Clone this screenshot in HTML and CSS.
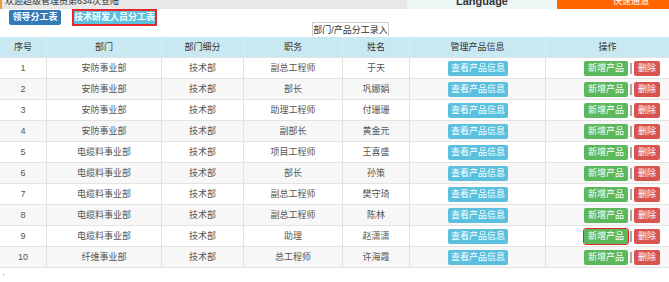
FILE: index.html
```html
<!DOCTYPE html>
<html lang="zh-CN">
<head>
    <meta charset="UTF-8">
    <title>部门/产品分工录入</title>
<link rel="stylesheet" href="styles.css">
</head>
<body>
    <div class="topbar">
        <div class="welcome"><span>欢迎超级管理员第634次登陆</span></div>
        <div class="lang"><span>Language</span></div>
        <div class="quick"><span>快速通道</span></div>
    </div>

    <div class="toolbar">
        <button class="btn btn-primary">领导分工表</button>
        <button class="btn btn-info active">技术研发人员分工表</button>
        <div class="caption">部门/产品分工录入</div>
    </div>

    <table class="list">
        <thead>
            <tr>
                <th class="c-no">序号</th>
                <th class="c-dept">部门</th>
                <th class="c-sub">部门细分</th>
                <th class="c-job">职务</th>
                <th class="c-name">姓名</th>
                <th class="c-info">管理产品信息</th>
                <th class="c-op">操作</th>
            </tr>
        </thead>
        <tbody>
            <tr><td>1</td><td>安防事业部</td><td>技术部</td><td>副总工程师</td><td>于天</td><td><button class="btn btn-view">查看产品信息</button></td><td class="ops"><button class="btn btn-add">新增产品</button><i class="sep"></i><button class="btn btn-del">删除</button></td></tr>
            <tr><td>2</td><td>安防事业部</td><td>技术部</td><td>部长</td><td>巩娜娟</td><td><button class="btn btn-view">查看产品信息</button></td><td class="ops"><button class="btn btn-add">新增产品</button><i class="sep"></i><button class="btn btn-del">删除</button></td></tr>
            <tr><td>3</td><td>安防事业部</td><td>技术部</td><td>助理工程师</td><td>付珊珊</td><td><button class="btn btn-view">查看产品信息</button></td><td class="ops"><button class="btn btn-add">新增产品</button><i class="sep"></i><button class="btn btn-del">删除</button></td></tr>
            <tr><td>4</td><td>安防事业部</td><td>技术部</td><td>副部长</td><td>黄金元</td><td><button class="btn btn-view">查看产品信息</button></td><td class="ops"><button class="btn btn-add">新增产品</button><i class="sep"></i><button class="btn btn-del">删除</button></td></tr>
            <tr><td>5</td><td>电缆料事业部</td><td>技术部</td><td>项目工程师</td><td>王喜盛</td><td><button class="btn btn-view">查看产品信息</button></td><td class="ops"><button class="btn btn-add">新增产品</button><i class="sep"></i><button class="btn btn-del">删除</button></td></tr>
            <tr><td>6</td><td>电缆料事业部</td><td>技术部</td><td>部长</td><td>孙策</td><td><button class="btn btn-view">查看产品信息</button></td><td class="ops"><button class="btn btn-add">新增产品</button><i class="sep"></i><button class="btn btn-del">删除</button></td></tr>
            <tr><td>7</td><td>电缆料事业部</td><td>技术部</td><td>副总工程师</td><td>樊守琦</td><td><button class="btn btn-view">查看产品信息</button></td><td class="ops"><button class="btn btn-add">新增产品</button><i class="sep"></i><button class="btn btn-del">删除</button></td></tr>
            <tr><td>8</td><td>电缆料事业部</td><td>技术部</td><td>副总工程师</td><td>陈林</td><td><button class="btn btn-view">查看产品信息</button></td><td class="ops"><button class="btn btn-add">新增产品</button><i class="sep"></i><button class="btn btn-del">删除</button></td></tr>
            <tr><td>9</td><td>电缆料事业部</td><td>技术部</td><td>助理</td><td>赵潇潇</td><td><button class="btn btn-view">查看产品信息</button></td><td class="ops"><button class="btn btn-add focus">新增产品</button><i class="sep"></i><button class="btn btn-del">删除</button></td></tr>
            <tr><td>10</td><td>纤维事业部</td><td>技术部</td><td>总工程师</td><td>许海霞</td><td><button class="btn btn-view">查看产品信息</button></td><td class="ops"><button class="btn btn-add">新增产品</button><i class="sep"></i><button class="btn btn-del">删除</button></td></tr>
        </tbody>
    </table>

    <div class="dot"></div>
</body>
</html>
```

FILE: styles.css
```css
body{
    margin: 0;
    font-family: "Liberation Sans", "Noto Sans CJK SC", sans-serif;
    font-size: 9px;
    color: #555;
    background: #fff;
}

/* 顶部条 (被裁掉一半) */
.topbar{
    display: flex;
    height: 9px;
    overflow: hidden;
}
.topbar span{
    display: block;
    margin-top: -5px;
    line-height: 12px;
    white-space: nowrap;
}
.welcome{
    width: 407px;
    background: #e8e8e8;
    color: #333;
    padding-left: 3px;
    border-left: 2px solid #f0a030;
    box-sizing: border-box;
}
.lang{
    width: 150px;
    background: #eef6f3;
    text-align: center;
    font-weight: bold;
    color: #333;
    font-size: 11px;
}
.lang span{
    margin-top: -6px;
    line-height: 14px;
}
.quick{
    flex: 1;
    background: #ff6600;
    color: #fff;
    padding-left: 56px;
}

.toolbar{
    display: flex;
    align-items: flex-start;
    height: 28px;
    padding-left: 9px;
}

.btn{
    display: inline-block;
    vertical-align: middle;
    font-family: "Liberation Sans", "Noto Sans CJK SC", sans-serif;
    font-size: 9px;
    color: #fff;
    border: none;
    border-radius: 2px;
    padding: 0;
    height: 15px;
    line-height: 15px;
    cursor: pointer;
    white-space: nowrap;
}
.btn-primary{
    background: #337ab7;
    font-weight: bold;
    width: 52px;
    margin-top: 1px;
}
.btn-info{
    background: #5bc0de;
    font-weight: bold;
    width: 85px;
    height: 17px;
    line-height: 13px;
    margin-left: 11px;
    border: 2px solid #e8262a;
    border-radius: 0;
}
.caption{
    align-self: flex-end;
    margin-left: 155px;
    margin-bottom: 1px;
    width: 77px;
    height: 14px;
    line-height: 14px;
    border: 1px solid #ccc;
    border-bottom: none;
    box-sizing: border-box;
    text-align: center;
    color: #333;
    white-space: nowrap;
}

.list{
    width: 669px;
    border-collapse: collapse;
    table-layout: fixed;
}
.list th, .list td{
    height: 20px;
    line-height: 20px;
    padding: 0;
    text-align: center;
    border: 1px solid #e3e3e3;
    border-top: none;
    white-space: nowrap;
}
.list tr > :first-child{ border-left: none; }
.list tr > :last-child{ border-right: none; }
.list th{
    background: #c9e9f2;
    color: #333;
    font-weight: normal;
    border-color: #d8eef5 #d8eef5 #e3e3e3;
}
.list tbody tr:nth-child(even){
    background: #f7f7f7;
}

.c-no{ width: 46px; }
.c-dept{ width: 114px; }
.c-sub{ width: 81px; }
.c-job{ width: 98px; }
.c-name{ width: 66px; }
.c-info{ width: 135px; }

.btn-view{
    background: #5bc0de;
    width: 60px;
    margin-left: 1px;
}
.ops{
    text-align: right !important;
    padding-right: 9px !important;
}
.btn-add{
    background: #5cb85c;
    width: 44px;
}
.btn-add.focus{
    outline: 1px solid #e8262a;
}
.btn-del{
    background: #d9534f;
    width: 26px;
}
.sep{
    display: inline-block;
    width: 2px;
    height: 11px;
    background: #aaa;
    margin: 0 2px;
    vertical-align: middle;
}

.dot{
    width: 1px;
    height: 1px;
    background: #6a8ccf;
    margin: 6px 0 0 3px;
}
```
